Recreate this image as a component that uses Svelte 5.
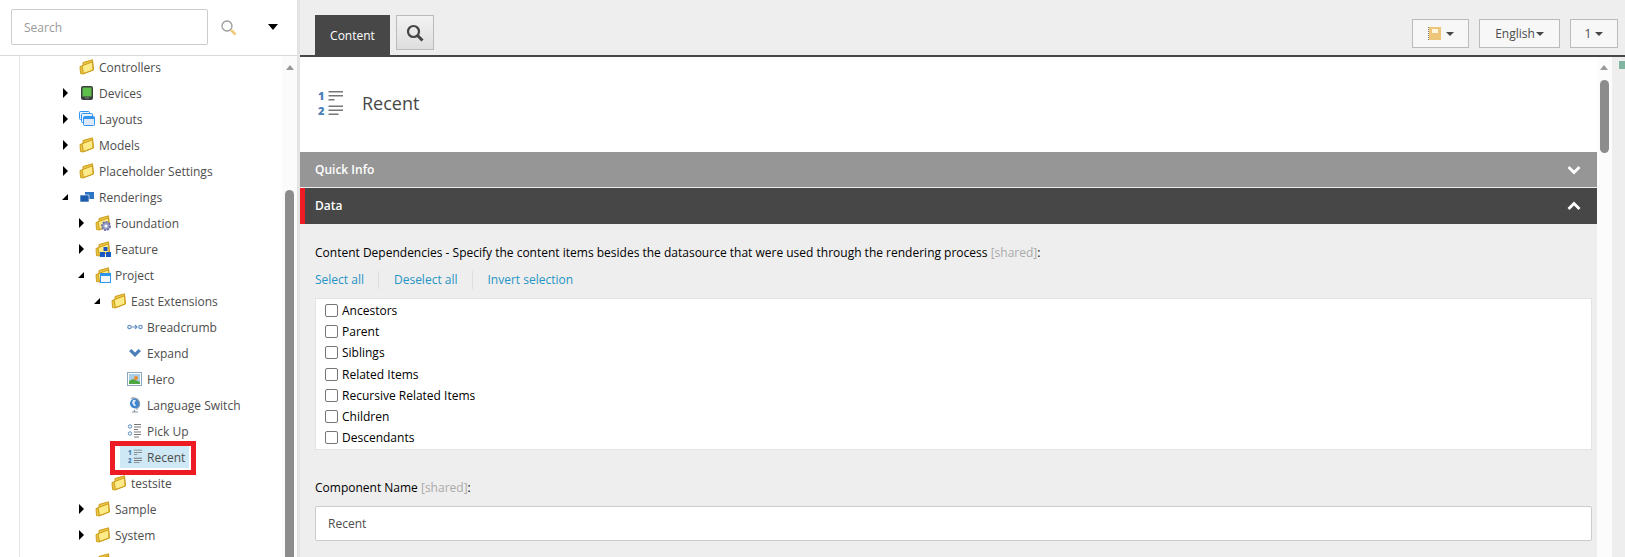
<script>
	const tree = [
		{ label: 'Controllers', level: 1, icon: 'folder' },
		{ label: 'Devices', level: 1, arrow: 'right', icon: 'device' },
		{ label: 'Layouts', level: 1, arrow: 'right', icon: 'layouts' },
		{ label: 'Models', level: 1, arrow: 'right', icon: 'folder' },
		{ label: 'Placeholder Settings', level: 1, arrow: 'right', icon: 'folder' },
		{ label: 'Renderings', level: 1, arrow: 'down', icon: 'renderings' },
		{ label: 'Foundation', level: 2, arrow: 'right', icon: 'folder', badge: 'gear' },
		{ label: 'Feature', level: 2, arrow: 'right', icon: 'folder', badge: 'cubes' },
		{ label: 'Project', level: 2, arrow: 'down', icon: 'folder', badge: 'window' },
		{ label: 'East Extensions', level: 3, arrow: 'down', icon: 'folder' },
		{ label: 'Breadcrumb', level: 4, icon: 'breadcrumb' },
		{ label: 'Expand', level: 4, icon: 'expand' },
		{ label: 'Hero', level: 4, icon: 'hero' },
		{ label: 'Language Switch', level: 4, icon: 'globe' },
		{ label: 'Pick Up', level: 4, icon: 'picklist' },
		{ label: 'Recent', level: 4, icon: 'numlist', selected: true },
		{ label: 'testsite', level: 3, icon: 'folder' },
		{ label: 'Sample', level: 2, arrow: 'right', icon: 'folder' },
		{ label: 'System', level: 2, arrow: 'right', icon: 'folder' },
		{ label: '', level: 2, icon: 'folder' }
	];

	const dependencies = [
		'Ancestors',
		'Parent',
		'Siblings',
		'Related Items',
		'Recursive Related Items',
		'Children',
		'Descendants'
	];
</script>

{#snippet numlist(size)}
	<svg width={size} height={size * 1.24} viewBox="0 -3 25 31">
		<g fill="#4a7fb8" font-family="Open Sans, sans-serif" font-size="11" font-weight="800">
			<text x="0" y="9">1</text>
			<text x="0" y="23.500">2</text>
		</g>
		<path d="M10.500 0h14.500v1.500H10.500zM10.500 4h14.500v1.500H10.500zM10.500 8h6v1.500h-6zM10.500 14.500h14.500V16H10.500zM10.500 18.500h14.500V20H10.500zM10.500 22.500h10V24h-10z" fill="#777" />
	</svg>
{/snippet}

{#snippet treeIcon(name)}
	{#if name === 'device'}
		<svg width="16" height="16" viewBox="0 0 16 16">
			<rect x="2" y="1" width="12" height="14" rx="2" fill="#3b3f3c" />
			<rect x="3.500" y="2.500" width="9" height="9" fill="#5fbf4a" />
			<rect x="6" y="12.500" width="4" height="1" fill="#888" />
		</svg>
	{:else if name === 'layouts'}
		<svg width="16" height="16" viewBox="0 0 16 16" fill="#e8f2ff" stroke="#2f95f0">
			<rect x=".500" y=".500" width="10" height="8" rx="1" />
			<rect x="2.500" y="2.500" width="11" height="9" rx="1" />
			<rect x="4.500" y="5.500" width="11" height="9" rx="1" fill="#dfe8f7" />
			<path d="M4.500 7h11" stroke-width="2" />
		</svg>
	{:else if name === 'renderings'}
		<svg width="16" height="16" viewBox="0 0 16 16">
			<rect x="6" y="3" width="9" height="7" fill="#2c74c4" />
			<rect x="1" y="6" width="9" height="7" fill="#1c5cad" stroke="#fff" stroke-width=".6" />
		</svg>
	{:else if name === 'breadcrumb'}
		<svg width="16" height="16" viewBox="0 0 16 16" fill="none" stroke="#6a94c4" stroke-width="1.200">
			<circle cx="2.500" cy="8" r="1.700" />
			<circle cx="13.500" cy="8" r="1.700" />
			<path d="M4.500 8h6M8 6l2 2-2 2" />
		</svg>
	{:else if name === 'expand'}
		<svg width="16" height="16" viewBox="0 0 16 16">
			<path d="M2 6 4.500 4 8 7.500 11.500 4 14 6 8 12z" fill="#4a7fb8" />
		</svg>
	{:else if name === 'hero'}
		<svg width="16" height="16" viewBox="0 0 16 16">
			<rect x=".500" y="1.500" width="14" height="13" fill="#fff" stroke="#8da6c2" />
			<rect x="2" y="3" width="11" height="10" fill="#a9cfe8" />
			<path d="M2 13v-3l4-2 7 3v2z" fill="#4fa53f" />
			<circle cx="9" cy="7" r="2" fill="#ee8a2e" />
		</svg>
	{:else if name === 'globe'}
		<svg width="16" height="16" viewBox="0 0 16 16">
			<circle cx="8" cy="6.500" r="5" fill="#3f86cf" />
			<path d="M6 3h3L7.500 6 9 9H7L5 6z" fill="#d8e8f5" />
			<path d="M4 1.500a6 6 0 0 1 5 11M7.500 13v1.500M5 15h6" fill="none" stroke="#8a97a3" stroke-width="1.200" />
		</svg>
	{:else if name === 'picklist'}
		<svg width="16" height="16" viewBox="0 0 16 16">
			<circle cx="3" cy="3.500" r="1.700" fill="none" stroke="#5a8dc4" />
			<circle cx="3" cy="10.500" r="1.700" fill="none" stroke="#5a8dc4" />
			<path d="M7 1h7v1H7zM7 3.500h7v1H7zM7 6h4v1H7zM7 8.500h7v1H7zM7 11h7v1H7zM7 13.500h5v1H7z" fill="#777" />
		</svg>
	{:else if name === 'numlist'}
		{@render numlist(14)}
	{:else}
		<svg width="16" height="16" viewBox="0 0 16 16" stroke="#c8960f" stroke-width=".9" stroke-linejoin="round">
			<path d="M1 7.500 4 6.500V3.500L13.500 .8 14.500 11 4 15 1.500 14.500z" fill="#e9c548" />
			<path d="M3 6.800 13.500 2.800 14 11 4.500 14.500z" fill="#fdeb8a" />
		</svg>
	{/if}
{/snippet}

{#snippet badge(name)}
	<svg class="badge" width="12" height="12" viewBox="0 0 12 12">
		{#if name === 'gear'}
			<circle cx="6" cy="6" r="4" fill="#9aa0c8" stroke="#6f75a5" stroke-width="2" stroke-dasharray="2 1" />
			<circle cx="6" cy="6" r="1.500" fill="#fff" />
		{:else if name === 'cubes'}
			<path d="M3.500 1h4v4h-4zM0 6h5v5H0zM6 6h5v5H6z" fill="#1957c2" />
		{:else}
			<rect x=".500" y="1.500" width="10" height="9" fill="#f4f8ff" stroke="#2f95f0" />
			<rect x=".500" y="1.500" width="10" height="2.500" fill="#2f95f0" />
		{/if}
	</svg>
{/snippet}

<div class="page">
	<aside class="sidebar">
		<div class="search-bar">
			<input class="search-input" placeholder="Search" />
			<svg class="search-icon" width="17" height="17" viewBox="0 0 17 17">
				<circle cx="7" cy="7" r="5" fill="none" stroke="#9a9a9a" stroke-width="1.300" />
				<path d="m11 11 4.500 4.500" stroke="#f2c879" stroke-width="2.600" />
			</svg>
			<span class="caret"></span>
		</div>

		<div class="tree-wrap">
			<div class="tree">
				{#each tree as item}
					<div class="row" style="padding-left: {item.level * 16 + 44}px">
						<span class="arrow">
							{#if item.arrow === 'right'}
								<span class="arrow-right"></span>
							{:else if item.arrow === 'down'}
								<span class="arrow-down"></span>
							{/if}
						</span>
						<span class="node" class:selected={item.selected}>
							<span class="tree-icon">
								{@render treeIcon(item.icon)}
								{#if item.badge}{@render badge(item.badge)}{/if}
							</span>
							{item.label}
						</span>
					</div>
				{/each}
			</div>

			<div class="tree-scroll">
				<span class="scroll-up"></span>
				<span class="tree-thumb"></span>
			</div>
			<div class="highlight"></div>
		</div>
	</aside>

	<main class="main">
		<div class="topbar">
			<div class="tab">Content</div>
			<button class="tab-search" aria-label="Search">
				<svg width="20" height="20" viewBox="0 0 20 20" fill="none" stroke="#444">
					<circle cx="8.500" cy="8.500" r="5.500" stroke-width="2.200" />
					<path d="m12.500 12.500 5 5" stroke-width="3" />
				</svg>
			</button>
			<div class="spacer"></div>
			<button class="tool tool-book" aria-label="Notebook">
				<svg width="13" height="13" viewBox="0 0 13 13">
					<rect x="1" y="0" width="12" height="13" fill="#eec679" />
					<rect x="4" y="2" width="6" height="4" fill="#fff6df" />
					<path d="M.500 0v13" stroke="#777" stroke-width="1" stroke-dasharray="1 1" />
				</svg>
				<span class="tool-caret"></span>
			</button>
			<button class="tool tool-lang">English<span class="tool-caret"></span></button>
			<button class="tool tool-ver">1<span class="tool-caret"></span></button>
		</div>

		<div class="editor">
			<div class="panel">
				<div class="title">
					{@render numlist(25)}
					<h1>Recent</h1>
				</div>

				<div class="section quick">
					Quick Info
					<svg width="14" height="10" viewBox="0 0 14 10" fill="none" stroke="#fff" stroke-width="2.800"><path d="m1.500 2 5.500 5.500L12.500 2" /></svg>
				</div>
				<div class="section data">
					Data
					<svg width="14" height="10" viewBox="0 0 14 10" fill="none" stroke="#fff" stroke-width="2.800"><path d="M1.500 8 7 2.500 12.500 8" /></svg>
				</div>

				<div class="form">
					<div class="label">Content Dependencies - Specify the content items besides the datasource that were used through the rendering process <span class="shared">[shared]</span>:</div>
					<div class="links">
						<span>Select all</span>
						<span>Deselect all</span>
						<span>Invert selection</span>
					</div>
					<div class="checklist">
						{#each dependencies as name}
							<label class="check"><input type="checkbox" />{name}</label>
						{/each}
					</div>
					<div class="label name-label">Component Name <span class="shared">[shared]</span>:</div>
					<input class="text-input" value="Recent" />
				</div>
			</div>

			<div class="main-scroll">
				<span class="scroll-up"></span>
				<span class="main-thumb"></span>
			</div>
			<div class="gutter"><span class="marker"></span></div>
		</div>
	</main>
</div>

<style>
	:global(body) {
		margin: 0;
		overflow: hidden;
		background: #eee;
	}

	.page {
		display: flex;
		height: 557px;
		overflow: hidden;
		font-family: "Open Sans", "Liberation Sans", sans-serif;
		font-size: 12px;
		color: #000;
	}

	.sidebar {
		width: 297px;
		flex: none;
		display: flex;
		flex-direction: column;
		background: #fff;
		border-right: 3px solid #e3e3e3;
	}

	.search-bar {
		height: 56px;
		flex: none;
		box-sizing: border-box;
		display: flex;
		align-items: flex-start;
		padding: 9px 0 0 11px;
		border-bottom: 1px solid #d9d9d9;
	}

	.search-input {
		width: 197px;
		height: 36px;
		box-sizing: border-box;
		padding: 0 12px;
		border: 1px solid #ccc;
		border-radius: 2px;
		font: inherit;
	}

	.search-input::placeholder {
		color: #999;
	}

	.search-icon {
		margin: 10px 0 0 12px;
	}

	.caret {
		margin: 15px 0 0 31px;
		border: 5px solid transparent;
		border-top: 6px solid #000;
		border-left-width: 5px;
		border-bottom-width: 0;
	}

	.tree-wrap {
		flex: 1;
		position: relative;
		overflow: hidden;
		margin-left: 19px;
		border-left: 1px solid #e6e6e6;
		display: flex;
	}

	.tree {
		flex: 1;
		margin: -2px 0 0 -20px;
		color: #4d4d4d;
	}

	.row {
		height: 26px;
		display: flex;
		align-items: center;
		white-space: nowrap;
	}

	.arrow {
		width: 19px;
		flex: none;
		display: flex;
		padding-left: 3px;
		box-sizing: border-box;
	}

	.arrow-right {
		border-left: 5px solid #000;
		border-top: 5px solid transparent;
		border-bottom: 5px solid transparent;
	}

	.arrow-down {
		border-right: 6px solid #000;
		border-top: 6px solid transparent;
		margin-left: -1px;
	}

	.node {
		display: flex;
		align-items: center;
		gap: 4px;
		height: 22px;
		padding-right: 4px;
	}

	.selected {
		background: #cfe8f5;
		margin-left: -7px;
		padding-left: 7px;
	}

	.tree-icon {
		position: relative;
		width: 16px;
		height: 16px;
		display: flex;
		align-items: center;
		justify-content: center;
	}

	.tree-icon svg {
		display: block;
	}

	.tree-icon .badge {
		position: absolute;
		right: -1px;
		bottom: -1px;
	}

	.tree-scroll {
		width: 15px;
		flex: none;
		background: #fbfbfb;
		position: relative;
	}

	.tree-scroll .scroll-up {
		position: absolute;
		top: 9px;
		left: 4px;
	}

	.scroll-up {
		border: 4px solid transparent;
		border-top-width: 0;
		border-bottom: 5px solid #999;
	}

	.tree-thumb {
		position: absolute;
		top: 134px;
		left: 3px;
		width: 9px;
		height: 400px;
		background: #8c8c8c;
		border-radius: 5px;
	}

	.highlight {
		position: absolute;
		left: 90px;
		top: 385px;
		width: 86px;
		height: 34px;
		box-sizing: border-box;
		border: 5px solid #ed1c24;
	}

	.main {
		flex: 1;
		min-width: 0;
		display: flex;
		flex-direction: column;
	}

	.topbar {
		height: 57px;
		flex: none;
		box-sizing: border-box;
		display: flex;
		align-items: flex-start;
		padding: 15px 7px 0 15px;
		border-bottom: 2px solid #474747;
	}

	.tab {
		width: 75px;
		height: 40px;
		background: #474747;
		color: #fff;
		display: flex;
		align-items: center;
		justify-content: center;
	}

	.tab-search {
		width: 38px;
		height: 35px;
		margin-left: 6px;
		padding: 0;
		display: flex;
		align-items: center;
		justify-content: center;
		border: 1px solid #bbb;
		background: linear-gradient(#f2f2f2, #dedede);
	}

	.spacer {
		flex: 1;
	}

	.tool {
		height: 29px;
		margin-top: 4px;
		box-sizing: border-box;
		display: flex;
		align-items: center;
		justify-content: center;
		gap: 1px;
		padding: 0;
		border: 1px solid #bbb;
		background: #f7f7f7;
		color: #4d4d4d;
		font: inherit;
	}

	.tool-book {
		width: 57px;
		gap: 5px;
	}

	.tool-lang {
		width: 81px;
		margin-left: 10px;
	}

	.tool-ver {
		width: 48px;
		margin-left: 10px;
		gap: 4px;
	}

	.tool-caret {
		border: 4px solid transparent;
		border-top: 4px solid #474747;
		border-bottom-width: 0;
		border-left-width: 4px;
	}

	.editor {
		flex: 1;
		min-height: 0;
		display: flex;
	}

	.panel {
		flex: 1;
		min-width: 0;
		overflow: hidden;
	}

	.title {
		height: 95px;
		box-sizing: border-box;
		background: #fff;
		display: flex;
		align-items: center;
		gap: 19px;
		padding: 0 0 3px 18px;
	}

	h1 {
		margin: 0;
		font-size: 18px;
		font-weight: 400;
		color: #474747;
	}

	.section {
		display: flex;
		align-items: center;
		justify-content: space-between;
		padding: 0 16px 0 15px;
		box-sizing: border-box;
		color: #fff;
		font-weight: 600;
	}

	.quick {
		height: 36px;
		background: #969696;
		border-bottom: 1px solid #eee;
	}

	.data {
		height: 36px;
		background: #474747;
		border-left: 5px solid #ed1c24;
		padding-left: 10px;
		padding-bottom: 1px;
	}

	.form {
		padding: 20px 5px 0 15px;
	}

	.label {
		line-height: 18px;
	}

	.shared {
		color: #aaa;
	}

	.links {
		display: flex;
		margin-top: 9px;
		color: #2694c4;
		line-height: 18px;
	}

	.links span {
		padding-right: 14px;
		margin-right: 15px;
		border-right: 1px solid #ddd;
	}

	.links span:last-child {
		border: 0;
	}

	.checklist {
		margin-top: 9px;
		height: 152px;
		box-sizing: border-box;
		padding-top: 1px;
		background: #fff;
		border: 1px solid #e3e3e3;
	}

	.check {
		display: flex;
		align-items: center;
		height: 21.200px;
		padding-left: 9px;
		gap: 4px;
	}

	.check input {
		appearance: none;
		width: 13px;
		height: 13px;
		margin: 0;
		background: #fff;
		border: 1px solid #767676;
		border-radius: 2px;
	}

	.name-label {
		margin-top: 29px;
	}

	.text-input {
		display: block;
		width: 100%;
		height: 35px;
		margin-top: 9px;
		box-sizing: border-box;
		padding: 0 12px;
		background: #fff;
		border: 1px solid #ccc;
		border-radius: 2px;
		font: inherit;
		color: #4d4d4d;
	}

	.main-scroll {
		width: 15px;
		flex: none;
		position: relative;
		background: #fcfcfc;
	}

	.main-scroll .scroll-up {
		position: absolute;
		top: 8px;
		left: 3px;
	}

	.main-thumb {
		position: absolute;
		top: 23px;
		left: 3px;
		width: 9px;
		height: 73px;
		background: #8c8c8c;
		border-radius: 5px;
	}

	.gutter {
		width: 13px;
		flex: none;
		background: #eee;
		padding-left: 7px;
		box-sizing: border-box;
	}

	.marker {
		display: block;
		width: 6px;
		height: 8px;
		margin-top: 4px;
		background: #82b59f;
	}
</style>
